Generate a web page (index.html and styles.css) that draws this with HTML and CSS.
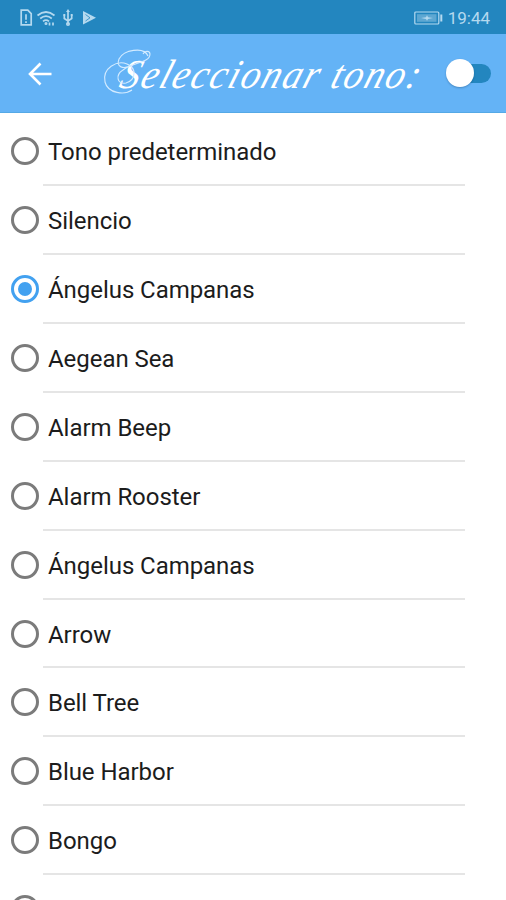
FILE: index.html
```html
<!DOCTYPE html>
<html lang="es">
<head>
<meta charset="utf-8">
<title>Seleccionar tono</title>
<link rel="stylesheet" href="styles.css">
</head>
<body>
<div class="screen">
  <div class="status">
    <svg class="status-icons" width="80" height="20" viewBox="0 0 80 20" fill="none" stroke="currentColor" stroke-width="1.700">
      <path d="M1.2 2.2h6.6l3.4 3.4v11.2h-10z"/><path d="M6 6.3v5.500M6 13.200v1.800"/>
      <path d="M17.500 7.500q8.500-7 17 0M20.200 10.500q5.800-4.600 11.600 0M23 13.300q3-2.500 6 0"/><circle cx="26" cy="15.500" r=".7"/><path d="M29.500 14.500v3M33 17.500v-3"/>
      <path d="M48 3v13M44.300 7v3.500L48 13l3.700-2.500V7"/><path d="M48 1l2 3h-4z" fill="currentColor" stroke="none"/><circle cx="48" cy="16" r="1.200"/><path d="M43.300 6.800h2M50.700 6.800h2"/>
      <path d="M63 3l13 6.800L63 16.500z" fill="currentColor" stroke="none"/><path d="M65.500 6.500l4.500 3.300-4.500 3.200" stroke="#2386bf" stroke-width=".8"/>
    </svg>
    <div class="status-right">
      <svg width="29" height="14" viewBox="0 0 29 14" fill="none" stroke="currentColor" stroke-width="1.200">
        <rect x=".8" y="1" width="24" height="12" rx="1"/><rect x="3" y="3.200" width="19.500" height="7.600" fill="currentColor" stroke="none" opacity=".4"/><path d="M27.300 3.500v7" stroke-width="2"/><path d="M7 7l5-.8 1-2 1 2 5 .8-5 1-1 1.800-1-1.800z" fill="currentColor" stroke="none"/>
      </svg>
      <span class="clock">19:44</span>
    </div>
  </div>
  <header class="appbar">
    <svg class="back" width="24" height="24" viewBox="0 0 24 24" fill="none" stroke="#fff" stroke-width="2.600"><path d="M23.500 12H2M12.500 1.500L2 12l10.500 10.500"/></svg>
    <h1 class="title"><span class="title-text">Seleccionar tono:</span>
      <svg class="flourish" width="60" height="50" viewBox="0 0 60 50" fill="none" stroke="#d3ebff" stroke-width="1.100"><path d="M29 41C22 46 5 45 2 33C-1 19 14 11 24 15C34 19 33 31 23 34C14 36 12 26 20 21C30 13 47 14 47 5C47 2 42 1 40 5M45 7C41-3 20 1 16 10C13 18 20 21 29 16"/></svg>
    </h1>
    <div class="switch"><span class="thumb"></span></div>
  </header>
  <main class="list">
    <div class="row"><span class="radio"></span><span class="label">Tono predeterminado</span></div>
    <div class="row"><span class="radio"></span><span class="label">Silencio</span></div>
    <div class="row"><span class="radio checked"></span><span class="label">Ángelus Campanas</span></div>
    <div class="row"><span class="radio"></span><span class="label">Aegean Sea</span></div>
    <div class="row"><span class="radio"></span><span class="label">Alarm Beep</span></div>
    <div class="row"><span class="radio"></span><span class="label">Alarm Rooster</span></div>
    <div class="row"><span class="radio"></span><span class="label">Ángelus Campanas</span></div>
    <div class="row"><span class="radio"></span><span class="label">Arrow</span></div>
    <div class="row"><span class="radio"></span><span class="label">Bell Tree</span></div>
    <div class="row"><span class="radio"></span><span class="label">Blue Harbor</span></div>
    <div class="row"><span class="radio"></span><span class="label">Bongo</span></div>
    <div class="row"><span class="radio"></span></div>
  </main>
</div>
</body>
</html>
```
FILE: styles.css
```css
* { box-sizing: border-box; }
body { margin: 0; background: #fff; font-family: Roboto, sans-serif; }
.screen { height: 900px; overflow: hidden; }
.status {
  height: 34px;
  padding: 1px 16px 0 20px;
  display: flex;
  align-items: center;
  justify-content: space-between;
  background: #2386bf;
  color: #b4d9ef;
}
.status-right { display: flex; align-items: center; gap: 5px; }
.clock { font-size: 17px; line-height: 20px; }
.appbar {
  height: 79px;
  padding: 1px 15px 0 28px;
  display: flex;
  align-items: center;
  background: #64b3f6;
  border-bottom: 1px solid #55a9e6;
}
.back { flex: none; }
.title {
  position: relative;
  flex: none;
  width: 317px;
  margin: 0 0 0 52px;
  padding: 2px 0 0 14px;
  color: #fff;
  font: italic 400 38px/60px "Liberation Serif", serif;
  letter-spacing: 1.850px;
  white-space: nowrap;
}
.title-text { display: inline-block; transform: skewX(-18deg) scaleY(1.08); transform-origin: 0 70%; }
.flourish { position: absolute; left: -1px; top: 6px; overflow: visible; }
.switch {
  position: relative;
  width: 40px;
  height: 19px;
  margin-left: auto;
  border-radius: 10px;
  background: #2386bf;
}
.thumb {
  position: absolute;
  left: -5px;
  top: -5px;
  width: 28px;
  height: 28px;
  border-radius: 50%;
  background: #fff;
  box-shadow: 0 1px 2px rgba(0, 40, 80, 0.3);
}
.list { padding-top: 4.300px; }
.row {
  position: relative;
  height: 68.900px;
  padding: 0 0 0.900px 11px;
  display: flex;
  align-items: center;
  gap: 9px;
}
.row::after {
  content: "";
  position: absolute;
  left: 43px;
  right: 41px;
  bottom: 0;
  height: 2px;
  background: #e5e5e5;
}
.radio {
  flex: none;
  width: 28px;
  height: 28px;
  border: 3px solid #7b7b7b;
  border-radius: 50%;
}
.checked {
  display: flex;
  align-items: center;
  justify-content: center;
  border-color: #42a1f0;
}
.checked::before {
  content: "";
  width: 14px;
  height: 14px;
  border-radius: 50%;
  background: #42a1f0;
}
.label { padding-top: 2px; color: #1c1c1c; font-size: 24px; line-height: 30px; letter-spacing: -0.050px; }
```
